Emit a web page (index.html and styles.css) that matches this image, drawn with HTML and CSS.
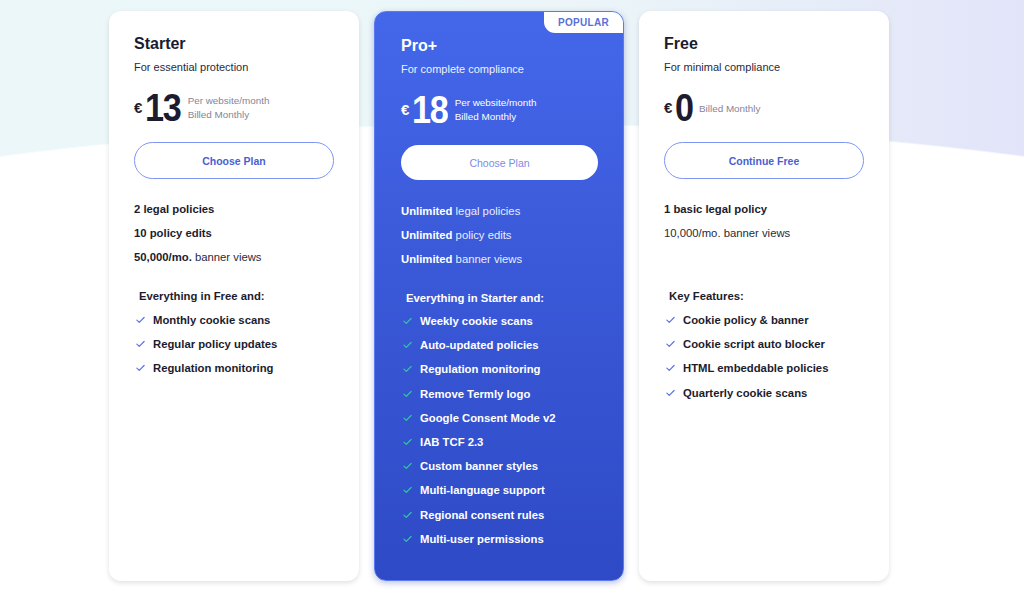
FILE: index.html
```html
<!DOCTYPE html>
<html>
<head>
<meta charset="utf-8">
<link rel="stylesheet" href="styles.css">
</head>
<body>
<main class="page">
  <div class="plans">
    <section class="card">
      <h2 class="title">Starter</h2>
      <p class="sub">For essential protection</p>
      <div class="price">
        <span class="cur">€</span><span class="num">13</span>
        <span class="note">Per website/month<br>Billed Monthly</span>
      </div>
      <button class="btn">Choose Plan</button>
      <ul class="limits">
        <li><b>2 legal policies</b></li>
        <li><b>10 policy edits</b></li>
        <li><b>50,000/mo.</b> banner views</li>
      </ul>
      <p class="head">Everything in Free and:</p>
      <ul class="feats">
        <li><svg viewBox="0 0 10 8"><path d="M1 4.2l2.6 2.4L9 1.2"/></svg>Monthly cookie scans</li>
        <li><svg viewBox="0 0 10 8"><path d="M1 4.2l2.6 2.4L9 1.2"/></svg>Regular policy updates</li>
        <li><svg viewBox="0 0 10 8"><path d="M1 4.2l2.6 2.4L9 1.2"/></svg>Regulation monitoring</li>
      </ul>
    </section>

    <section class="card pro">
      <span class="badge">POPULAR</span>
      <h2 class="title">Pro+</h2>
      <p class="sub">For complete compliance</p>
      <div class="price">
        <span class="cur">€</span><span class="num">18</span>
        <span class="note">Per website/month<br>Billed Monthly</span>
      </div>
      <button class="btn">Choose Plan</button>
      <ul class="limits">
        <li><b>Unlimited</b> legal policies</li>
        <li><b>Unlimited</b> policy edits</li>
        <li><b>Unlimited</b> banner views</li>
      </ul>
      <p class="head">Everything in Starter and:</p>
      <ul class="feats">
        <li><svg viewBox="0 0 10 8"><path d="M1 4.2l2.6 2.4L9 1.2"/></svg>Weekly cookie scans</li>
        <li><svg viewBox="0 0 10 8"><path d="M1 4.2l2.6 2.4L9 1.2"/></svg>Auto-updated policies</li>
        <li><svg viewBox="0 0 10 8"><path d="M1 4.2l2.6 2.4L9 1.2"/></svg>Regulation monitoring</li>
        <li><svg viewBox="0 0 10 8"><path d="M1 4.2l2.6 2.4L9 1.2"/></svg>Remove Termly logo</li>
        <li><svg viewBox="0 0 10 8"><path d="M1 4.2l2.6 2.4L9 1.2"/></svg>Google Consent Mode v2</li>
        <li><svg viewBox="0 0 10 8"><path d="M1 4.2l2.6 2.4L9 1.2"/></svg>IAB TCF 2.3</li>
        <li><svg viewBox="0 0 10 8"><path d="M1 4.2l2.6 2.4L9 1.2"/></svg>Custom banner styles</li>
        <li><svg viewBox="0 0 10 8"><path d="M1 4.2l2.6 2.4L9 1.2"/></svg>Multi-language support</li>
        <li><svg viewBox="0 0 10 8"><path d="M1 4.2l2.6 2.4L9 1.2"/></svg>Regional consent rules</li>
        <li><svg viewBox="0 0 10 8"><path d="M1 4.2l2.6 2.4L9 1.2"/></svg>Multi-user permissions</li>
      </ul>
    </section>

    <section class="card">
      <h2 class="title">Free</h2>
      <p class="sub">For minimal compliance</p>
      <div class="price">
        <span class="cur">€</span><span class="num">0</span>
        <span class="note single">Billed Monthly</span>
      </div>
      <button class="btn">Continue Free</button>
      <ul class="limits">
        <li><b>1 basic legal policy</b></li>
        <li>10,000/mo. banner views</li>
      </ul>
      <p class="head key">Key Features:</p>
      <ul class="feats">
        <li><svg viewBox="0 0 10 8"><path d="M1 4.2l2.6 2.4L9 1.2"/></svg>Cookie policy &amp; banner</li>
        <li><svg viewBox="0 0 10 8"><path d="M1 4.2l2.6 2.4L9 1.2"/></svg>Cookie script auto blocker</li>
        <li><svg viewBox="0 0 10 8"><path d="M1 4.2l2.6 2.4L9 1.2"/></svg>HTML embeddable policies</li>
        <li><svg viewBox="0 0 10 8"><path d="M1 4.2l2.6 2.4L9 1.2"/></svg>Quarterly cookie scans</li>
      </ul>
    </section>
  </div>
</main>
</body>
</html>
```

FILE: styles.css
```css
* { box-sizing: border-box; margin: 0; padding: 0; }
html, body { width: 1024px; height: 589px; overflow: hidden; }
body {
  font-family: "Liberation Sans", Arial, sans-serif;
  color: #1c1c2e;
  background:
    radial-gradient(ellipse 1400px 467px at 50% 590px, #ffffff 99.6%, rgba(255,255,255,0) 100%),
    linear-gradient(90deg, #ebf7f8 0%, #ecf6f8 55%, #e2e4f9 100%);
}
.page { padding: 11px 0 0 109px; }
.plans { display: flex; gap: 15px; align-items: flex-start; }
.card {
  position: relative;
  width: 250px;
  height: 570px;
  background: #fff;
  border-radius: 12px;
  padding: 23px 25px 0 25px;
  box-shadow: 0 2px 5px rgba(0,0,0,0.12);
}
.title { font-size: 16px; line-height: 20px; font-weight: 700; color: #1b1b2d; }
.sub { font-size: 11px; line-height: 14px; margin-top: 6px; color: #2a2a3a; }
.price { display: flex; align-items: center; margin-top: 19px; height: 30px; }
.cur { font-size: 15px; font-weight: 700; margin-right: 3px; margin-top: -2px; }
.num { font-size: 38px; font-weight: 700; letter-spacing: -1.5px; line-height: 30px; transform: scaleX(0.9); transform-origin: left center; margin-right: -3px; }
.note { font-size: 9.9px; line-height: 14px; color: #858599; margin-left: 6px; margin-top: -1px; }
.note.single { margin-left: 7px; margin-top: 2px; }
.btn {
  display: block;
  width: 200px;
  height: 37px;
  margin-top: 19px;
  border: 1px solid #7f95f4;
  border-radius: 19px;
  background: #fff;
  font-family: inherit;
  font-size: 10.5px;
  font-weight: 700;
  color: #4a5fd3;
}
.limits { list-style: none; margin-top: 23px; }
.limits li { font-size: 11.3px; line-height: 14px; height: 24px; color: #2a2a3a; }
.limits b { color: #1c1c2e; }
.head { font-size: 11.3px; font-weight: 700; line-height: 14px; margin-top: 15px; padding-left: 5px; }
.head.key { margin-top: 39px; }
.feats { list-style: none; margin-top: 5px; }
.feats li { display: flex; align-items: center; font-size: 11.3px; font-weight: 700; line-height: 14px; height: 24.2px; }
.feats svg { width: 9px; height: 8px; margin: 0 8px 0 2px; fill: none; stroke: #5a70e6; stroke-width: 1.3; stroke-linecap: round; stroke-linejoin: round; }

.pro {
  background: linear-gradient(180deg, #4467ea 0%, #3a59d8 45%, #2e4ac6 100%);
  border: 1px solid #5b7af0;
  padding: 24px 26px 0 26px;
  color: #fff;
  box-shadow: 0 2px 6px rgba(30,50,160,0.3);
}
.pro .title, .pro .sub, .pro .limits li, .pro .limits b, .pro .head, .pro .feats li { color: #fff; }
.pro .sub { color: #eef1ff; }
.pro .note { color: #fff; }
.pro .num, .pro .cur { color: #fff; }
.pro .btn { border: none; color: #7a8ce6; font-weight: 400; width: 197px; height: 35px; margin-top: 20px; }
.pro .limits { margin-top: 24px; }
.pro .limits li { color: #e9edff; }
.pro .limits b { color: #fff; }
.pro .feats { margin-top: 4px; }
.pro .feats svg { stroke: #2fc9a2; }
.badge {
  position: absolute;
  top: 0; right: 0;
  width: 79px; height: 21px;
  background: #fff;
  border-radius: 0 11px 0 11px;
  color: #5a6fd8;
  font-size: 10px;
  font-weight: 700;
  line-height: 21px;
  text-align: center;
  letter-spacing: 0.3px;
}
```
